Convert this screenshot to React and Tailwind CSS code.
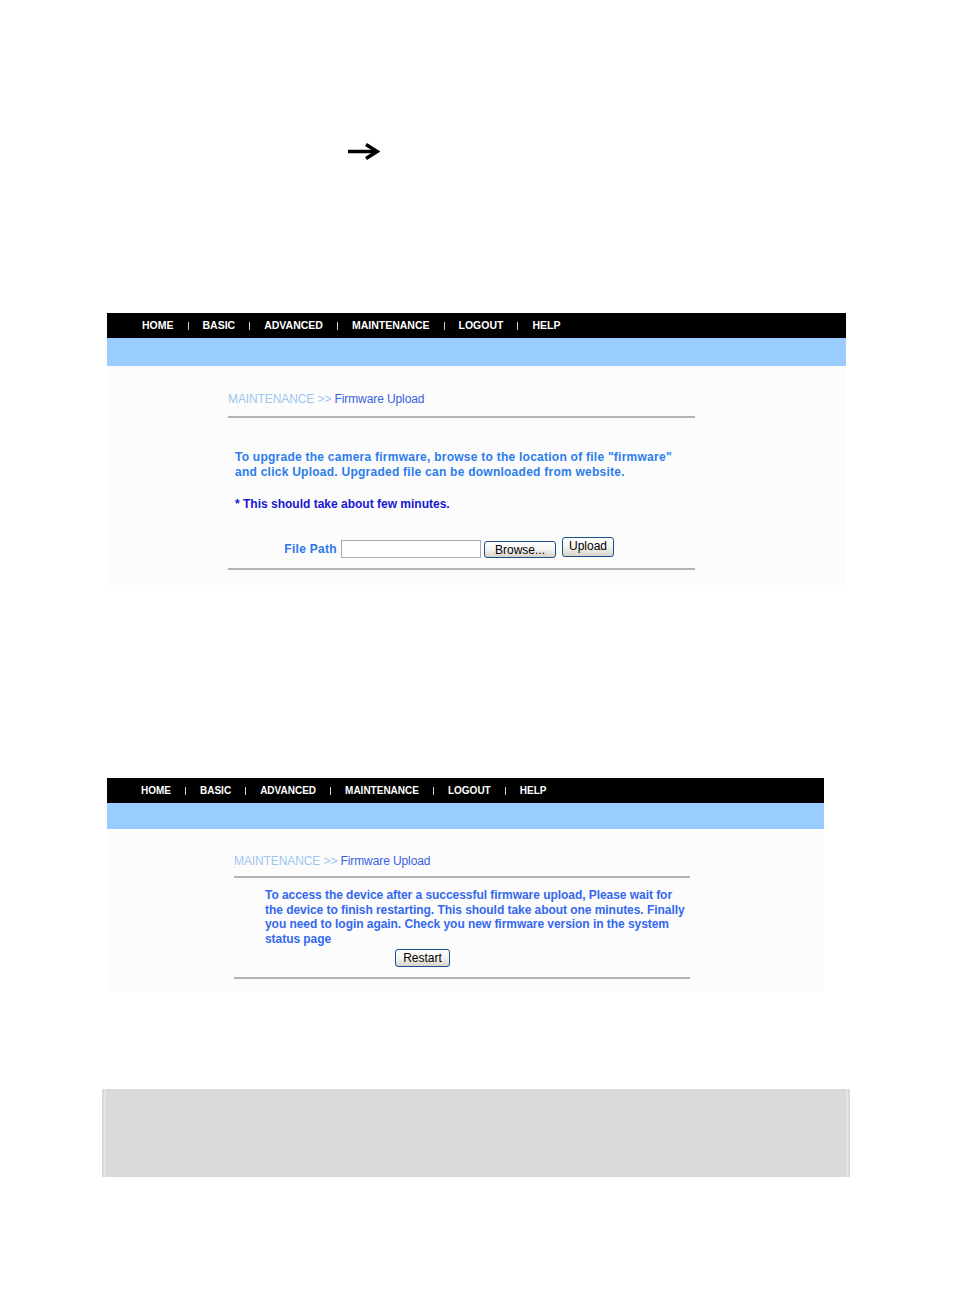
import React from "react";

const font = "font-['Liberation_Sans',Arial,sans-serif]";

function Nav({ items, size, gap, pl }) {
  return (
    <div className={`h-[25px] bg-black flex items-center ${pl} ${gap} text-white font-bold ${size} ${font}`}>
      {items.map((it, i) => (
        <React.Fragment key={it}>
          {i > 0 && <span className="w-px h-[8px] bg-[#d0d0d0]" />}
          <span className="leading-none">{it}</span>
        </React.Fragment>
      ))}
    </div>
  );
}

function XPButton({ children, className }) {
  return (
    <button
      className={`border border-[#1c4f8f] rounded-[3px] bg-gradient-to-b from-white via-[#f4f4f0] to-[#d6d3c8] text-[12px] leading-none text-black ${font} ${className}`}
    >
      {children}
    </button>
  );
}

function Crumb() {
  return (
    <div className={`text-[12px] leading-[14px] tracking-[-0.1px] ${font}`}>
      <span className="text-[#9ec6f2]">MAINTENANCE &gt;&gt; </span>
      <span className="text-[#3a5fe0]">Firmware Upload</span>
    </div>
  );
}

const items = ["HOME", "BASIC", "ADVANCED", "MAINTENANCE", "LOGOUT", "HELP"];

export default function App() {
  return (
    <div className="min-h-[1311px] w-[954px] bg-white flex flex-col">
      <div className="mt-[143px] pl-[347px] h-[17px]">
        <svg width="33" height="17" viewBox="0 0 33 17">
          <path d="M1 8.5 H29" stroke="black" strokeWidth="3.5" fill="none" />
          <path d="M19 1.5 L30 8.5 L19 15.5" stroke="black" strokeWidth="3.5" fill="none" strokeLinejoin="miter" />
        </svg>
      </div>

      {/* Panel 1 */}
      <div className="mt-[153px] ml-[107px] w-[739px]">
        <Nav items={items} size="text-[10.5px]" gap="gap-[14px]" pl="pl-[35px]" />
        <div className="h-[28px] bg-[#99ccff]" />
        <div className="h-[219px] bg-[#fcfcfc] pl-[121px] pt-[26px]">
          <div className="w-[467px]">
            <Crumb />
            <div className="mt-[10px] h-[2px] bg-[#b3b3b3]" />
            <div className={`mt-[32px] pl-[7px] text-[12px] leading-[15px] font-bold text-[#2c7cec] tracking-[0.25px] ${font} whitespace-nowrap`}>
              To upgrade the camera firmware, browse to the location of file "firmware"
              <br />
              and click Upload. Upgraded file can be downloaded from website.
            </div>
            <div className={`mt-[17px] pl-[7px] text-[12px] leading-[15px] font-bold text-[#1717d0] ${font}`}>
              * This should take about few minutes.
            </div>
            <div className="mt-[25px] h-[21px] flex items-end">
              <div className={`w-[109px] text-right text-[12px] font-bold text-[#2a78ec] tracking-[0.3px] leading-[18px] ${font}`}>
                File Path
              </div>
              <div className="ml-[4px] w-[140px] h-[18px] border border-[#a5acb5] bg-white" />
              <XPButton className="ml-[3px] w-[72px] h-[17px]">Browse...</XPButton>
              <XPButton className="ml-[6px] mb-[1px] w-[52px] h-[20px] pb-[3px]">Upload</XPButton>
            </div>
            <div className="mt-[10px] h-[2px] bg-[#b3b3b3]" />
          </div>
        </div>
      </div>

      {/* Panel 2 */}
      <div className="mt-[193px] ml-[107px] w-[717px]">
        <Nav items={items} size="text-[10px]" gap="gap-[14px]" pl="pl-[34px]" />
        <div className="h-[26px] bg-[#99ccff]" />
        <div className="h-[163px] bg-[#fcfcfc] pl-[127px] pt-[25px]">
          <div className="w-[456px]">
            <Crumb />
            <div className="mt-[8px] h-[2px] bg-[#b3b3b3]" />
            <div className={`mt-[10px] pl-[31px] text-[12px] leading-[14.5px] font-bold text-[#3468ee] tracking-[-0.05px] ${font} whitespace-nowrap`}>
              To access the device after a successful firmware upload, Please wait for
              <br />
              the device to finish restarting. This should take about one minutes. Finally
              <br />
              you need to login again. Check you new firmware version in the system
              <br />
              status page
            </div>
            <div className="mt-[3px] pl-[161px] flex">
              <XPButton className="w-[55px] h-[18px]">Restart</XPButton>
            </div>
            <div className="mt-[10px] h-[2px] bg-[#b3b3b3]" />
          </div>
        </div>
      </div>

      {/* Gray box */}
      <div className="mt-[97px] ml-[102px] w-[748px] h-[88px] bg-[#d9d9d9] px-[2px]">
        <div className="h-full border-x-2 border-[#e4e4e4] bg-[#d9d9d9]" />
      </div>
    </div>
  );
}
